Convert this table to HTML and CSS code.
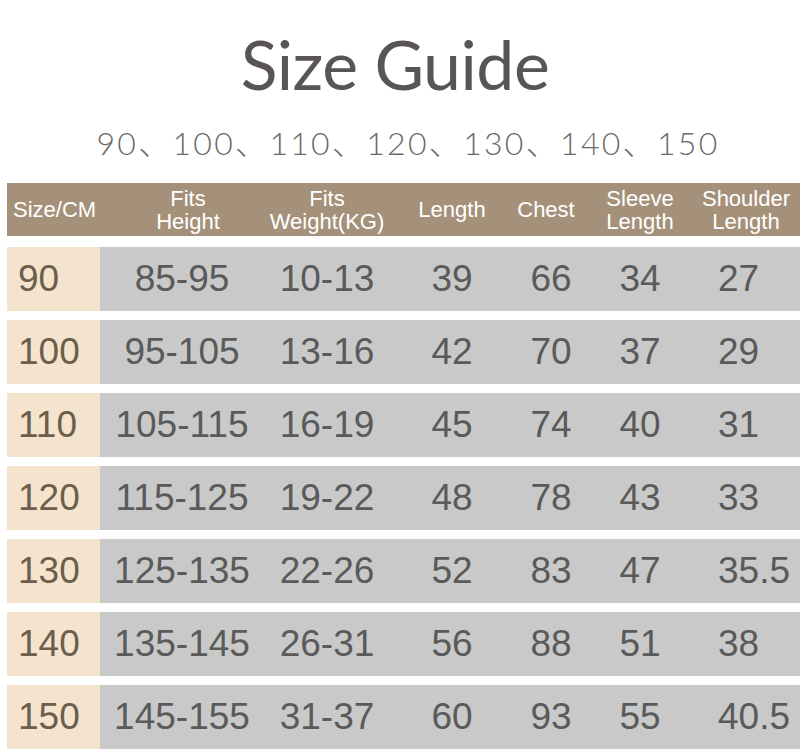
FILE: index.html
```html
<!DOCTYPE html>
<html lang="en">
<head>
<meta charset="utf-8">
<title>Size Guide</title>
<link rel="stylesheet" href="styles.css">
</head>
<body>
<main class="page">
  <h1 class="title">Size Guide</h1>
  <p class="sizes">90、100、110、120、130、140、150</p>
  <div class="table">
    <div class="row head">
      <div class="cell c1">Size/CM</div>
      <div class="cell c2">Fits<br>Height</div>
      <div class="cell c3">Fits<br>Weight(KG)</div>
      <div class="cell c4">Length</div>
      <div class="cell c5">Chest</div>
      <div class="cell c6">Sleeve<br>Length</div>
      <div class="cell c7">Shoulder<br>Length</div>
    </div>
    <div class="row body"><div class="cell c1">90</div><div class="cell c2">85-95</div><div class="cell c3">10-13</div><div class="cell c4">39</div><div class="cell c5">66</div><div class="cell c6">34</div><div class="cell c7">27</div></div>
    <div class="row body"><div class="cell c1">100</div><div class="cell c2">95-105</div><div class="cell c3">13-16</div><div class="cell c4">42</div><div class="cell c5">70</div><div class="cell c6">37</div><div class="cell c7">29</div></div>
    <div class="row body"><div class="cell c1">110</div><div class="cell c2">105-115</div><div class="cell c3">16-19</div><div class="cell c4">45</div><div class="cell c5">74</div><div class="cell c6">40</div><div class="cell c7">31</div></div>
    <div class="row body"><div class="cell c1">120</div><div class="cell c2">115-125</div><div class="cell c3">19-22</div><div class="cell c4">48</div><div class="cell c5">78</div><div class="cell c6">43</div><div class="cell c7">33</div></div>
    <div class="row body"><div class="cell c1">130</div><div class="cell c2">125-135</div><div class="cell c3">22-26</div><div class="cell c4">52</div><div class="cell c5">83</div><div class="cell c6">47</div><div class="cell c7">35.5</div></div>
    <div class="row body"><div class="cell c1">140</div><div class="cell c2">135-145</div><div class="cell c3">26-31</div><div class="cell c4">56</div><div class="cell c5">88</div><div class="cell c6">51</div><div class="cell c7">38</div></div>
    <div class="row body"><div class="cell c1">150</div><div class="cell c2">145-155</div><div class="cell c3">31-37</div><div class="cell c4">60</div><div class="cell c5">93</div><div class="cell c6">55</div><div class="cell c7">40.5</div></div>
  </div>
</main>
</body>
</html>
```

FILE: styles.css
```css
* { box-sizing: border-box; }
html, body { margin: 0; padding: 0; background: #ffffff; }
.page {
  width: 805px;
  height: 753px;
  overflow: hidden;
  padding: 0 5px 0 7px;
}
.title {
  margin: 24px 0 0;
  padding-right: 17px;
  text-align: center;
  font-family: "Lato", "Open Sans", sans-serif;
  font-weight: 400;
  font-size: 68px;
  line-height: 80px;
  color: #595455;
  letter-spacing: -0.5px;
}
.sizes {
  margin: 20px 0 0;
  padding-left: 9px;
  text-align: center;
  font-family: "Lato", "Noto Sans CJK SC", sans-serif;
  font-weight: 300;
  font-size: 32px;
  line-height: 38px;
  color: #6a6a6a;
  letter-spacing: 2.3px;
}
.table {
  margin-top: 21px;
  display: flex;
  flex-direction: column;
  gap: 9px;
  width: 793px;
}
.row {
  display: grid;
  grid-template-columns: 93px 164px 126px 124px 74px 104px 108px;
  align-items: center;
  font-family: "Liberation Sans", Arial, sans-serif;
}
.head {
  height: 53px;
  background: #a5917a;
  color: #ffffff;
  font-size: 22px;
  line-height: 23px;
  margin-bottom: 2px;
}
.head .cell { text-align: center; }
.head .c1 { text-align: left; padding-left: 6px; }
.head .c2 { padding-left: 12px; }
.head .c5 { padding-right: 10px; }
.body {
  height: 64px;
  background: #c9c9c9;
  color: #5a5a5a;
  font-size: 37px;
}
.body .cell { text-align: center; }
.body .c1 {
  align-self: stretch;
  display: flex;
  align-items: center;
  padding-left: 11px;
  background: #f4e4cd;
  color: #6d5d4b;
}
.body .c7 { text-align: left; padding-left: 26px; }
```
